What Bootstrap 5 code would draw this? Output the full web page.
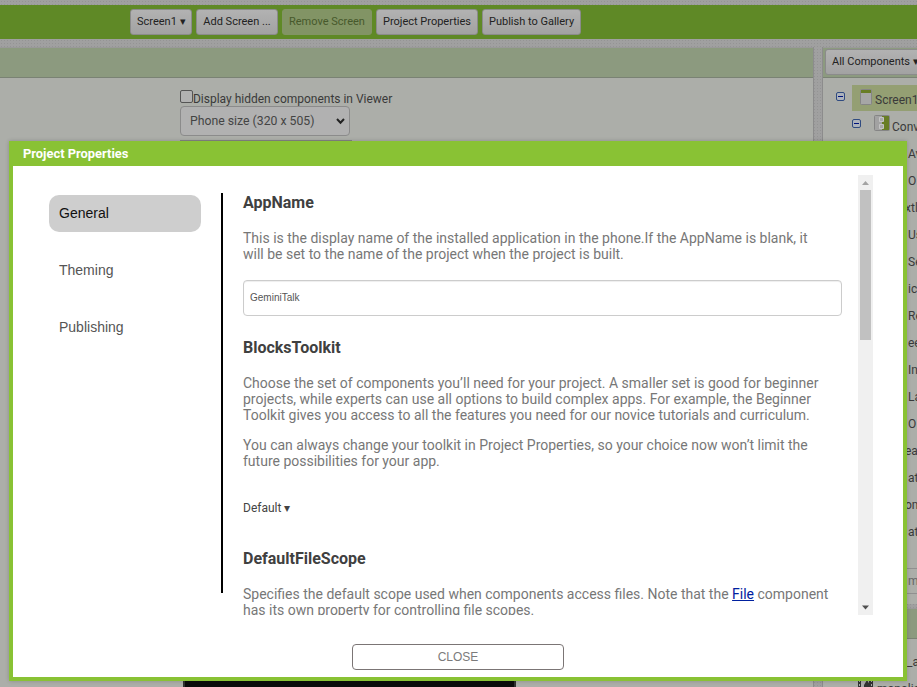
<!DOCTYPE html>
<html lang="en">
<head>
<meta charset="utf-8">
<meta name="viewport" content="width=device-width, initial-scale=1">
<title>Project Properties</title>
<link href="https://cdn.jsdelivr.net/npm/bootstrap@5.3.0/dist/css/bootstrap.min.css" rel="stylesheet">
<style>
body{font-family:Roboto,sans-serif;font-size:12px;line-height:16px;color:#3a3a3a;height:687px;background-color:#a0a0a0;background-image:radial-gradient(#949494 35%,transparent 40%);background-size:3px 3px}
.toolbar{height:34px;margin-top:5px;background:#5f8926;padding:4px 0 0 130px;gap:4px}
.tool{font-size:11px;line-height:16px;height:26px;padding:4px 6px;border:1px solid #8b8b8b;border-radius:3px;color:#222;background:linear-gradient(#b2b2b2,#a2a2a2);white-space:nowrap}
.tool.off{background:#829465;color:#47592c;border-color:#829465}
.tool.screen{width:62px}
.tool.add{width:82px}
.workspace{height:640px;margin-top:8px}
.viewer{width:814px;border-right:1px solid #8c8c8c;background:#acaea9}
.tree{width:95px}
.tree-panel{height:557px;border-left:1px solid #8c8c8c;background:#acaea9}
.media-panel{height:90px;margin-top:4px;border-left:1px solid #8c8c8c;background:#acaea9}
.strip{height:31px;background:#8c9a7f;border-top:1px solid #999;border-bottom:1px solid #7a8274}
.tool.all{margin:1px 0 0 2px;height:26px}
.controls{padding:11px 0 0 180px}
.box{width:13px;height:13px;border:1px solid #555;border-radius:2px;background:#b2b2b2;margin-top:1px}
.label-text{line-height:18px;padding-top:1px;margin-bottom:-2px;letter-spacing:-.01px}
.size-select{width:170px;height:30px;padding:0 4px 0 9px;border:1px solid #8b8b8b;border-radius:4px;background:#b1b1b1;font-size:12.25px;color:#444}
.frame-top{width:172px;border-top:1px solid #858585;margin-top:4px}
.tree-body{padding-top:7px}
.node{height:27px;padding-left:12px}
.toggle{margin-top:6px}
.node-pick{background:#949f73;height:26px;width:70px;margin-left:6px;padding:4px 0 0 8px}
.node-pick span{padding:3px 0 0 3px}
.node.second{padding-left:28px}
.arr{margin:3px 0 0 12px}
.second span{padding:7px 0 0 2px}
.items{padding-top:2px}
.item{height:27px;line-height:27px;padding-left:85px}
.item.cut{padding-left:82px}
.rename{height:26px;margin-top:22px;border:1px solid #909090;border-width:1px 0;line-height:25px;padding-left:85px;color:#666}
.media-item{height:27px;line-height:27px;padding-left:84px;margin-top:10px}
.media-file{padding-left:35px;gap:4px}
.media-file span{padding-top:5px}
.dialog-box{left:9px;top:141px;width:898px;height:540px;background:#fff;border:4px solid #89c234;border-top:0;box-shadow:0 0 4px rgba(0,0,0,.2)}
.dialog-title{height:25px;line-height:25px;padding-left:10px;background:#89c234;color:#fff;font-size:12.9px;font-weight:700}
.side{width:210px;height:400px;margin-top:27px;padding:2px 20px 0 36px;border-right:2px solid #000;font:14px/17px "Liberation Sans",Arial,sans-serif;color:#555}
.side-tab{height:37px;padding:10px;margin-bottom:20px;border-radius:10px;line-height:17px}
.side-tab.active{background:#cecece;color:#111}
.pane{width:635px;height:440px;margin-top:9px;padding:18px 0 0 20px;overflow:hidden;color:#777;font-size:14px;white-space:nowrap}
.pane h2{font-size:16px;line-height:19px;font-weight:700;color:#404040;margin:0 0 18px}
.pane p{margin:0 0 14px}
.pane a{color:#00209f;text-decoration:underline}
.field{width:599px;height:36px;margin:18px 0 22px;border:1px solid #ccc;border-radius:4px;padding:9px 6px;font:10px/16px "Liberation Sans",Arial,sans-serif;color:#555;box-shadow:inset 0 1px 1px rgba(0,0,0,.07)}
.choice{font-size:12px;color:#444;margin:31px 0 33px}
.scroller{width:15px;height:440px;margin-top:9px;background:#f0f0f0}
.arrow{height:15px}
.thumb{width:11px;height:150px;background:#c1c1c1}
.close-btn{width:212px;height:26px;margin-top:29px;border:1px solid #7b7575;border-radius:4px;font:12px/24px "Liberation Sans",Arial,sans-serif;color:#7b7b7b;background:#fff}
.phone{left:183px;top:681px;width:333px;height:6px;background:#0b0b0b;border:solid #303030;border-width:0 2px}
</style>
</head>
<body class="overflow-hidden position-relative">
<div class="overflow-hidden">
<nav class="toolbar d-flex">
 <button class="tool screen">Screen1 ▾</button><button class="tool add">Add Screen ...</button><button class="tool off">Remove Screen</button><button class="tool">Project Properties</button><button class="tool">Publish to Gallery</button>
</nav>
<main class="workspace d-flex justify-content-between">
 <section class="viewer">
  <div class="strip"></div>
  <div class="controls">
   <div class="d-flex"><span class="box"></span><span class="label-text">Display hidden components in Viewer</span></div>
   <div class="size-select d-flex align-items-center justify-content-between"><span>Phone size (320 x 505)</span><svg width="9" height="7" viewBox="0 0 9 7"><path d="M1 1l3.500 3.700L8 1" fill="none" stroke="#222" stroke-width="2"/></svg></div>
   <div class="frame-top"></div>
  </div>
 </section>
 <aside class="tree overflow-hidden text-nowrap">
  <div class="tree-panel">
   <div class="strip"><button class="tool all">All Components ▾</button></div>
   <div class="tree-body">
    <div class="node d-flex">
     <svg class="toggle flex-shrink-0" width="11" height="11" viewBox="0 0 11 11"><rect x="1.500" y="1.500" width="8" height="8" rx="1.500" fill="#adb3bb" stroke="#304b80"/><path d="M3 5.500h5" stroke="#00127b"/></svg>
     <div class="node-pick d-flex flex-shrink-0"><svg class="flex-shrink-0" width="12" height="16" viewBox="0 0 12 16"><rect x=".5" y=".5" width="11" height="15" rx="1" fill="#a6a6a6" stroke="#858585"/><path d="M1 1h10v3H1z" fill="#687d25"/></svg><span>Screen1</span></div>
    </div>
    <div class="node second d-flex">
     <svg class="toggle flex-shrink-0" width="11" height="11" viewBox="0 0 11 11"><rect x="1.500" y="1.500" width="8" height="8" rx="1.500" fill="#adb3bb" stroke="#304b80"/><path d="M3 5.500h5" stroke="#00127b"/></svg>
     <svg class="arr flex-shrink-0" width="16" height="16" viewBox="0 0 16 16"><rect x=".5" y=".5" width="15" height="15" rx="1" fill="#a2a2a2" stroke="#858585"/><path d="M8 1h7v14H8z" fill="#687d25"/><path d="M5.500 2.500h4v4h-4zM5.500 9.500h4v4h-4z" fill="#a8a8a8" stroke="#c4c4c4"/></svg><span>Conv</span>
    </div>
    <div class="items"><div class="item">Av</div><div class="item">O</div><div class="item cut">xtl</div><div class="item">Us</div><div class="item">Se</div><div class="item cut">&nbsp;ice</div><div class="item">Re</div><div class="item cut">&nbsp;ee</div><div class="item">In</div><div class="item">La</div><div class="item">O</div><div class="item cut">ear</div><div class="item cut">&nbsp;at</div><div class="item cut">om</div><div class="item cut">&nbsp;at</div></div>
    <div class="rename">m</div>
   </div>
  </div>
  <div class="media-panel">
   <div class="strip"></div>
   <div class="media-item">_a</div>
   <div class="media-file d-flex"><svg class="flex-shrink-0" width="15" height="16" viewBox="0 0 15 16"><path d="M0 0h15v16H0z" fill="#333"/><path d="M3 3h8v11H3zM1 4h1v2H1zM1 8h1v2H1zM13 4h1v2h-1zM13 8h1v2h-1z" fill="#aaa"/><path d="M6 9l3-5 3 5v5H6z" fill="#333"/></svg><span>monolis</span></div>
  </div>
 </aside>
</main>
</div>
<div class="phone position-absolute"></div>
<div class="dialog-box position-absolute">
 <div class="dialog-title">Project Properties</div>
 <div class="d-flex">
  <div class="side"><div class="side-tab active">General</div><div class="side-tab">Theming</div><div class="side-tab">Publishing</div></div>
  <div class="pane">
   <h2>AppName</h2>
   <p>This is the display name of the installed application in the phone.If the AppName is blank, it<br>will be set to the name of the project when the project is built.</p>
   <div class="field">GeminiTalk</div>
   <h2>BlocksToolkit</h2>
   <p>Choose the set of components you’ll need for your project. A smaller set is good for beginner<br>projects, while experts can use all options to build complex apps. For example, the Beginner<br>Toolkit gives you access to all the features you need for our novice tutorials and curriculum.</p>
   <p>You can always change your toolkit in Project Properties, so your choice now won’t limit the<br>future possibilities for your app.</p>
   <div class="choice">Default ▾</div>
   <h2>DefaultFileScope</h2>
   <p>Specifies the default scope used when components access files. Note that the <a href="#">File</a> component<br>has its own property for controlling file scopes.</p>
  </div>
  <div class="scroller d-flex flex-column align-items-center">
   <svg class="arrow" width="15" height="15" viewBox="0 0 15 15"><path d="M4 10l3.500-4L11 10z" fill="#a3a3a3"/></svg>
   <div class="thumb"></div>
   <svg class="arrow mt-auto" width="15" height="15" viewBox="0 0 15 15"><path d="M4 5.500l3.500 4L11 5.500z" fill="#505050"/></svg>
  </div>
 </div>
 <button class="close-btn d-block mx-auto p-0">CLOSE</button>
</div>
</body>
</html>
